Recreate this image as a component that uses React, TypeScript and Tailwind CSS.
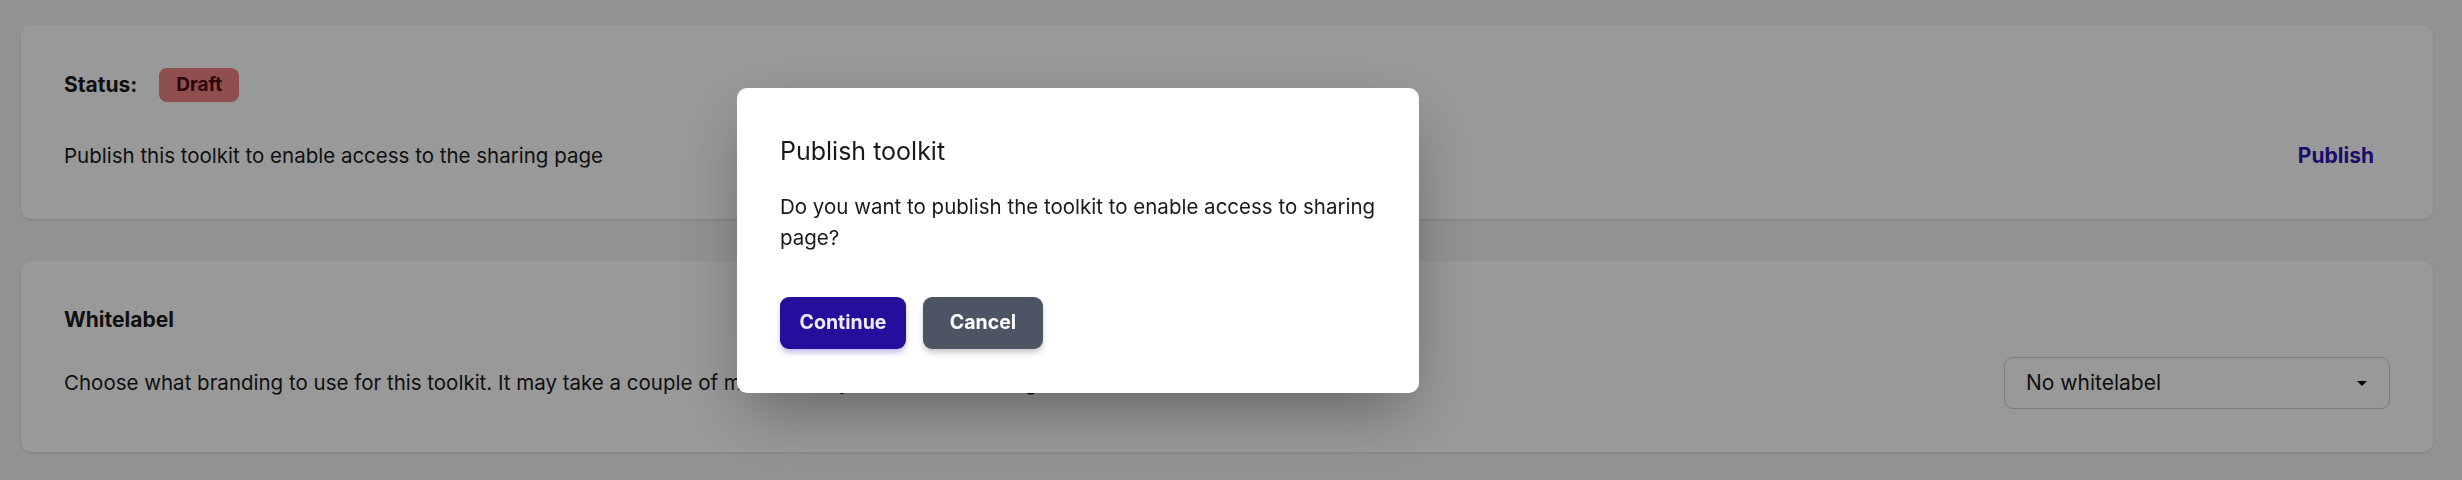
import React from "react";

export default function App() {
  return (
    <div className="relative min-h-screen bg-[#f3f4f6] pl-[21px] pr-[29px] pt-[25px] pb-[27px] font-['Inter','Noto_Sans',sans-serif] text-[#1a1a1a]">
      {/* Status card */}
      <section className="flex flex-col rounded-[10px] bg-white p-[43px] shadow-[0_1px_3px_rgba(0,0,0,0.12)]">
        <div className="flex h-[34px] items-center gap-[22px]">
          <span className="text-[21px] font-bold">Status:</span>
          <span className="flex h-[34px] items-center rounded-[8px] bg-[#ee8484] px-[17px] text-[19px] font-bold text-[#480814]">
            Draft
          </span>
        </div>
        <div className="mt-[34px] flex h-[40px] items-center justify-between">
          <p className="text-[20.5px]">Publish this toolkit to enable access to the sharing page</p>
          <button className="flex h-[40px] items-center px-4 text-[21px] font-bold text-[#2c17b4]">Publish</button>
        </div>
      </section>

      {/* Whitelabel card */}
      <section className="mt-[42px] flex flex-col rounded-[10px] bg-white p-[43px] shadow-[0_1px_3px_rgba(0,0,0,0.12)]">
        <h2 className="text-[21px] font-bold leading-[32px]">Whitelabel</h2>
        <div className="mt-[21px] flex items-center justify-between">
          <p className="text-[20.5px]">
            Choose what branding to use for this toolkit. It may take a couple of minutes for your toolkit to change.
          </p>
          <div className="flex h-[52px] w-[386px] items-center justify-between rounded-[9px] border border-[#d0d0d0] pl-[21px] pr-[22px]">
            <span className="text-[21px]">No whitelabel</span>
            <svg width="10" height="5" viewBox="0 0 10 5">
              <path d="M0 0 L10 0 L5 5 Z" fill="#111" />
            </svg>
          </div>
        </div>
      </section>

      {/* Overlay + modal */}
      <div className="fixed inset-0 flex items-center bg-black/40">
        <div className="ml-[737px] w-[682px] rounded-[10px] bg-white px-[43px] pt-[47px] pb-[44px] shadow-[0_25px_60px_-10px_rgba(0,0,0,0.35)]">
          <h3 className="text-[25px] leading-[32px]">Publish toolkit</h3>
          <p className="mt-[24px] text-[20.5px] leading-[31px]">
            Do you want to publish the toolkit to enable access to sharing page?
          </p>
          <div className="mt-[44px] flex gap-[17px]">
            <button className="flex h-[52px] w-[126px] items-center justify-center rounded-[9px] bg-[#240e9c] text-[19.5px] font-bold text-[#ecebff] shadow-[0_4px_6px_-1px_rgba(60,30,200,0.35)]">
              Continue
            </button>
            <button className="flex h-[52px] w-[120px] items-center justify-center rounded-[9px] bg-[#4b5563] text-[19.5px] font-bold text-white shadow-[0_4px_6px_-1px_rgba(0,0,0,0.25)]">
              Cancel
            </button>
          </div>
        </div>
      </div>
    </div>
  );
}
